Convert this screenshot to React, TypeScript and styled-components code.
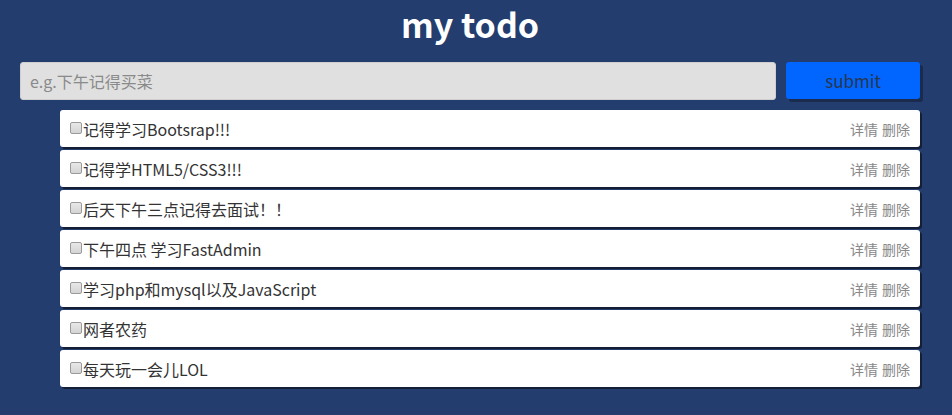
import React from "react";
import styled, { createGlobalStyle } from "styled-components";

const Global = createGlobalStyle`
  html, body { margin: 0; padding: 0; background: #233d6e; }
  body { font-family: "Noto Sans CJK SC", "Noto Sans", sans-serif; }
`;

const Page = styled.div`
  width: 952px;
  height: 415px;
  background: #233d6e;
  box-sizing: border-box;
  padding: 0 32px 0 20px;
`;

const Title = styled.h1`
  margin: 0;
  height: 52px;
  line-height: 48px;
  text-align: center;
  color: #fff;
  font-size: 34px;
  font-weight: 700;
`;

const Form = styled.div`
  display: flex;
  gap: 10px;
  margin-top: 10px;
  height: 38px;
`;

const Input = styled.input`
  flex: 1;
  height: 38px;
  box-sizing: border-box;
  border: 1px solid #cfcfcf;
  border-radius: 3px;
  background: #e0e0e0;
  padding: 0 9px;
  font-size: 16px;
  font-family: inherit;
  color: #333;
  outline: none;
  &::placeholder { color: #8a8a8a; }
`;

const Button = styled.button`
  width: 134px;
  height: 37px;
  border: none;
  border-radius: 3px;
  background: #0066ff;
  color: #28364f;
  font-size: 17px;
  font-family: inherit;
  box-shadow: 3px 3px 0 #1a2b4d;
  cursor: pointer;
`;

const List = styled.ul`
  list-style: none;
  margin: 10px 0 0 40px;
  padding: 0;
  display: flex;
  flex-direction: column;
  gap: 3px;
`;

const Item = styled.li`
  height: 37px;
  box-sizing: border-box;
  background: #fff;
  border-radius: 3px;
  box-shadow: 2px 2px 0 #141f36;
  display: flex;
  align-items: center;
  padding: 0 10px;
`;

const Check = styled.input`
  appearance: none;
  -webkit-appearance: none;
  box-sizing: border-box;
  margin: 0 1px 2px 0;
  width: 12px;
  height: 12px;
  border: 1px solid #9a9a9a;
  border-radius: 2px;
  background: linear-gradient(#e8e8e8, #d4d4d4);
`;

const Label = styled.span`
  flex: 1;
  font-size: 16px;
  color: #333;
`;

const Action = styled.a`
  font-size: 14px;
  color: #888;
  margin-left: 4px;
  text-decoration: none;
  cursor: pointer;
`;

const todos = [
  "记得学习Bootsrap!!!",
  "记得学HTML5/CSS3!!!",
  "后天下午三点记得去面试！！",
  "下午四点 学习FastAdmin",
  "学习php和mysql以及JavaScript",
  "网者农药",
  "每天玩一会儿LOL",
];

export default function App() {
  return (
    <Page>
      <Global />
      <Title>my todo</Title>
      <Form>
        <Input placeholder="e.g.下午记得买菜" />
        <Button>submit</Button>
      </Form>
      <List>
        {todos.map((t) => (
          <Item key={t}>
            <Check type="checkbox" />
            <Label>{t}</Label>
            <Action>详情</Action>
            <Action>删除</Action>
          </Item>
        ))}
      </List>
    </Page>
  );
}
